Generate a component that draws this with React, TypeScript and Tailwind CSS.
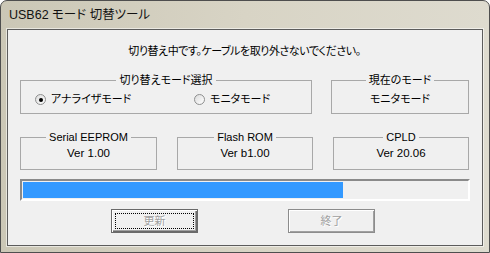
const ui = "font-['Liberation_Sans','Noto_Sans_CJK_JP',sans-serif] [font-feature-settings:'palt']"

function Group({ title, className, children }: { title: string; className: string; children: React.ReactNode }) {
  return (
    <fieldset className={`border border-[#a8a8a8] ${className}`}>
      <legend className="mx-auto px-[3px] text-[11px] leading-[14px] text-black">{title}</legend>
      {children}
    </fieldset>
  )
}

function Radio({ checked, label }: { checked?: boolean; label: string }) {
  return (
    <div className="flex items-center gap-[5px]">
      <span className="flex h-[11px] w-[11px] items-center justify-center rounded-full border border-[#8e8f8f] bg-gradient-to-br from-[#dcdcdc] to-white">
        {checked && <span className="h-[4px] w-[4px] rounded-full bg-black" />}
      </span>
      <span>{label}</span>
    </div>
  )
}

function Value({ title, value, className }: { title: string; value: string; className: string }) {
  return (
    <Group title={title} className={`h-[40px] ${className}`}>
      <div className="flex h-[20px] items-center justify-center text-[11.5px]">{value}</div>
    </Group>
  )
}

export default function App() {
  return (
    <div className={`flex h-[253px] w-[490px] flex-col rounded-t-[7px] border border-[#4e4e4e] bg-gradient-to-r from-[#cbc7b6] via-[#d8d4c5] to-[#dedbcf] px-[6px] pb-[6px] text-[11px] text-black ${ui}`}>
      <div className="flex h-[28px] items-center pl-[2px] pt-[1px] text-[12.5px] text-[#111]">USB62 モード 切替ツール</div>

      <div className="flex h-[217px] w-[476px] flex-col border border-[#5c5c5c] bg-[#f0f0f0] pl-[12px] pr-[13px] shadow-[0_0_0_1px_rgba(255,255,255,0.55)]">
        <div className="mt-[14px] text-center leading-[14px] tracking-[-0.45px]">切り替え中です。ケーブルを取り外さないでください。</div>

        <div className="mt-[15px] flex gap-[19px]">
          <Group title="切り替えモード選択" className="h-[41px] w-[292px]">
            <div className="flex h-[25px] items-center pl-[14px]">
              <div className="w-[159px]">
                <Radio checked label="アナライザモード" />
              </div>
              <Radio label="モニタモード" />
            </div>
          </Group>
          <Group title="現在のモード" className="h-[41px] w-[138px]">
            <div className="flex h-[25px] items-center justify-center">モニタモード</div>
          </Group>
        </div>

        <div className="mt-[16px] flex gap-[20px]">
          <Value title="Serial EEPROM" value="Ver 1.00" className="w-[137px]" />
          <Value title="Flash ROM" value="Ver b1.00" className="w-[136px]" />
          <Value title="CPLD" value="Ver 20.06" className="w-[136px]" />
        </div>

        <div className="mt-[9px] h-[22px] w-[450px] border-2 border-b-white border-l-[#8a8a8a] border-r-white border-t-[#8a8a8a] p-[1px]">
          <div className="h-full w-[320px] bg-[#3399ff]" />
        </div>

        <div className="mt-[8px] flex gap-[90px] pl-[91px]">
          <button className="relative h-[24px] w-[87px] border border-[#6a6a6a] bg-[#f0f0f0] text-[#a0a0a0] [text-shadow:1px_1px_0_#fff] shadow-[inset_1px_1px_0_#fff,inset_-1px_-1px_0_#6a6a6a,inset_-2px_-2px_0_#a0a0a0]">
            <span className="absolute inset-[3px] border border-dotted border-black" />
            更新
          </button>
          <button className="h-[24px] w-[87px] border border-[#8c8c8c] bg-[#f0f0f0] text-[#a0a0a0] [text-shadow:1px_1px_0_#fff] shadow-[inset_1px_1px_0_#fff,inset_-1px_-1px_0_#a0a0a0]">
            終了
          </button>
        </div>
      </div>
    </div>
  )
}
